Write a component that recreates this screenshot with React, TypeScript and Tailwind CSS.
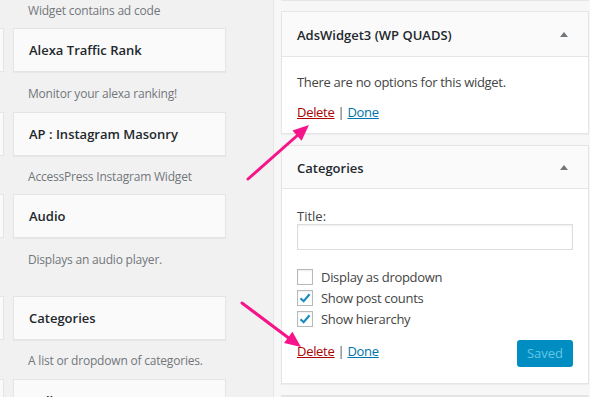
const items = [
  { title: 'Alexa Traffic Rank', desc: 'Monitor your alexa ranking!', mt: 'mt-[8px]', dmt: 'mt-[11px]' },
  { title: 'AP : Instagram Masonry', desc: 'AccessPress Instagram Widget', mt: 'mt-[9px]', dmt: 'mt-[10px]' },
  { title: 'Audio', desc: 'Displays an audio player.', mt: 'mt-[8px]', dmt: 'mt-[11px]' },
  { title: 'Categories', desc: 'A list or dropdown of categories.', mt: 'mt-[27px]', dmt: 'mt-[10px]' },
  { title: 'Gallery', desc: '', mt: 'mt-[9px]', dmt: '' },
]

function Card({ title }: { title: string }) {
  return (
    <div className="flex">
      <div className="w-[4px] h-[44px] border-y border-r border-[#e5e5e5] bg-[#fafafa]" />
      <div className="ml-[9px] w-[213px] h-[44px] border border-[#e5e5e5] bg-[#fafafa] shadow-[0_1px_1px_rgba(0,0,0,0.04)] pl-[15px] pt-[2px] flex items-center text-[13px] font-semibold text-[#23282d]">
        {title}
      </div>
    </div>
  )
}

function Checkbox({ checked, label }: { checked: boolean; label: string }) {
  return (
    <label className="flex items-center h-[16px]">
      <span className="w-[16px] h-[16px] border border-[#b4b9be] bg-white shadow-[inset_0_1px_2px_rgba(0,0,0,0.07)] flex items-center justify-center">
        {checked && (
          <svg width="14" height="14" viewBox="0 0 14 14">
            <path d="M2.5 7.2 L5.6 10.2 L11.6 3.2" fill="none" stroke="#1e8cbe" strokeWidth="2.2" />
          </svg>
        )}
      </span>
      <span className="ml-[8px] pt-[2px] text-[13px] tracking-[-0.3px] text-[#444]">{label}</span>
    </label>
  )
}

function Links() {
  return (
    <div className="text-[13px] leading-[18px] tracking-[-0.3px] text-[#555]">
      <a href="#" className="text-[#a00] underline">Delete</a>
      <span> | </span>
      <a href="#" className="text-[#0073aa] underline">Done</a>
    </div>
  )
}

function Triangle() {
  return (
    <svg width="10" height="6" viewBox="0 0 10 6">
      <path d="M1 6 L5 1 L9 6 Z" fill="#72777c" />
    </svg>
  )
}

export default function App() {
  return (
    <div
      className="relative w-[590px] h-[397px] overflow-hidden bg-[#f1f1f1] flex"
      style={{ fontFamily: '"Open Sans", "Noto Sans", sans-serif' }}
    >
      {/* available widgets */}
      <div className="w-[273px] flex flex-col">
        <div className="ml-[28px] h-[20px] pt-[1px] leading-[20px] text-[12px] tracking-[-0.2px] text-[#72777c]">Widget contains ad code</div>
        {items.map((it) => (
          <div key={it.title} className={it.mt}>
            <Card title={it.title} />
            {it.desc && (
              <div className={`${it.dmt} ml-[28px] h-[20px] pt-[1px] leading-[20px] text-[12px] tracking-[-0.2px] text-[#72777c]`}>{it.desc}</div>
            )}
          </div>
        ))}
      </div>

      {/* sidebar */}
      <div className="w-[317px] border-l border-[#e5e5e5] bg-[#f7f7f7] pl-[7px] flex flex-col">
        <div className="w-[308px] h-[2px] border-x border-b border-[#e5e5e5] bg-[#fafafa]" />

        <div className="mt-[10px] w-[308px] border border-[#e5e5e5] bg-[#fafafa] shadow-[0_1px_1px_rgba(0,0,0,0.04)]">
          <div className="h-[45px] pl-[15px] pr-[19px] flex items-center justify-between border-b border-[#e5e5e5]">
            <span className="pt-[3px] text-[13px] font-semibold text-[#23282d]">AdsWidget3 (WP QUADS)</span>
            <Triangle />
          </div>
          <div className="bg-white px-[15px] pt-[16px] pb-[12px]">
            <p className="text-[13px] leading-[18px] tracking-[-0.3px] text-[#444]">There are no options for this widget.</p>
            <div className="mt-[12px]">
              <Links />
            </div>
          </div>
        </div>

        <div className="mt-[11px] w-[308px] border border-[#e5e5e5] bg-[#fafafa] shadow-[0_1px_1px_rgba(0,0,0,0.04)]">
          <div className="h-[43px] pl-[15px] pr-[19px] flex items-center justify-between border-b border-[#e5e5e5]">
            <span className="pt-[3px] text-[13px] font-semibold text-[#23282d]">Categories</span>
            <Triangle />
          </div>
          <div className="bg-white px-[15px] pt-[16px] pb-[16px]">
            <div className="pt-[2px] h-[18px] text-[13px] leading-[18px] text-[#444]">Title:</div>
            <div className="mt-[1px] h-[26px] border border-[#ddd] bg-white shadow-[inset_0_1px_2px_rgba(0,0,0,0.07)]" />
            <div className="mt-[19px] flex flex-col gap-[5px]">
              <Checkbox checked={false} label="Display as dropdown" />
              <Checkbox checked label="Show post counts" />
              <Checkbox checked label="Show hierarchy" />
            </div>
            <div className="mt-[13px] flex items-center justify-between">
              <div className="self-start mt-[2px]">
                <Links />
              </div>
              <button className="w-[56px] h-[27px] rounded-[3px] bg-[#008ec2] text-[13px] text-[#66c6e4]">Saved</button>
            </div>
          </div>
        </div>

        <div className="mt-[11px] w-[308px] h-[20px] border border-[#e5e5e5] bg-[#fafafa]" />
      </div>

      {/* annotation arrows */}
      <svg className="absolute inset-0 pointer-events-none" width="590" height="397" viewBox="0 0 590 397">
        <line x1="248" y1="179" x2="299" y2="134" stroke="#f5148a" strokeWidth="3" strokeLinecap="round" />
        <polygon points="309,125 301.6,140.8 292.4,130.4" fill="#f5148a" />
        <line x1="242" y1="303" x2="290" y2="339" stroke="#f5148a" strokeWidth="3" strokeLinecap="round" />
        <polygon points="301,347 284,342.9 292.4,331.7" fill="#f5148a" />
      </svg>
    </div>
  )
}
